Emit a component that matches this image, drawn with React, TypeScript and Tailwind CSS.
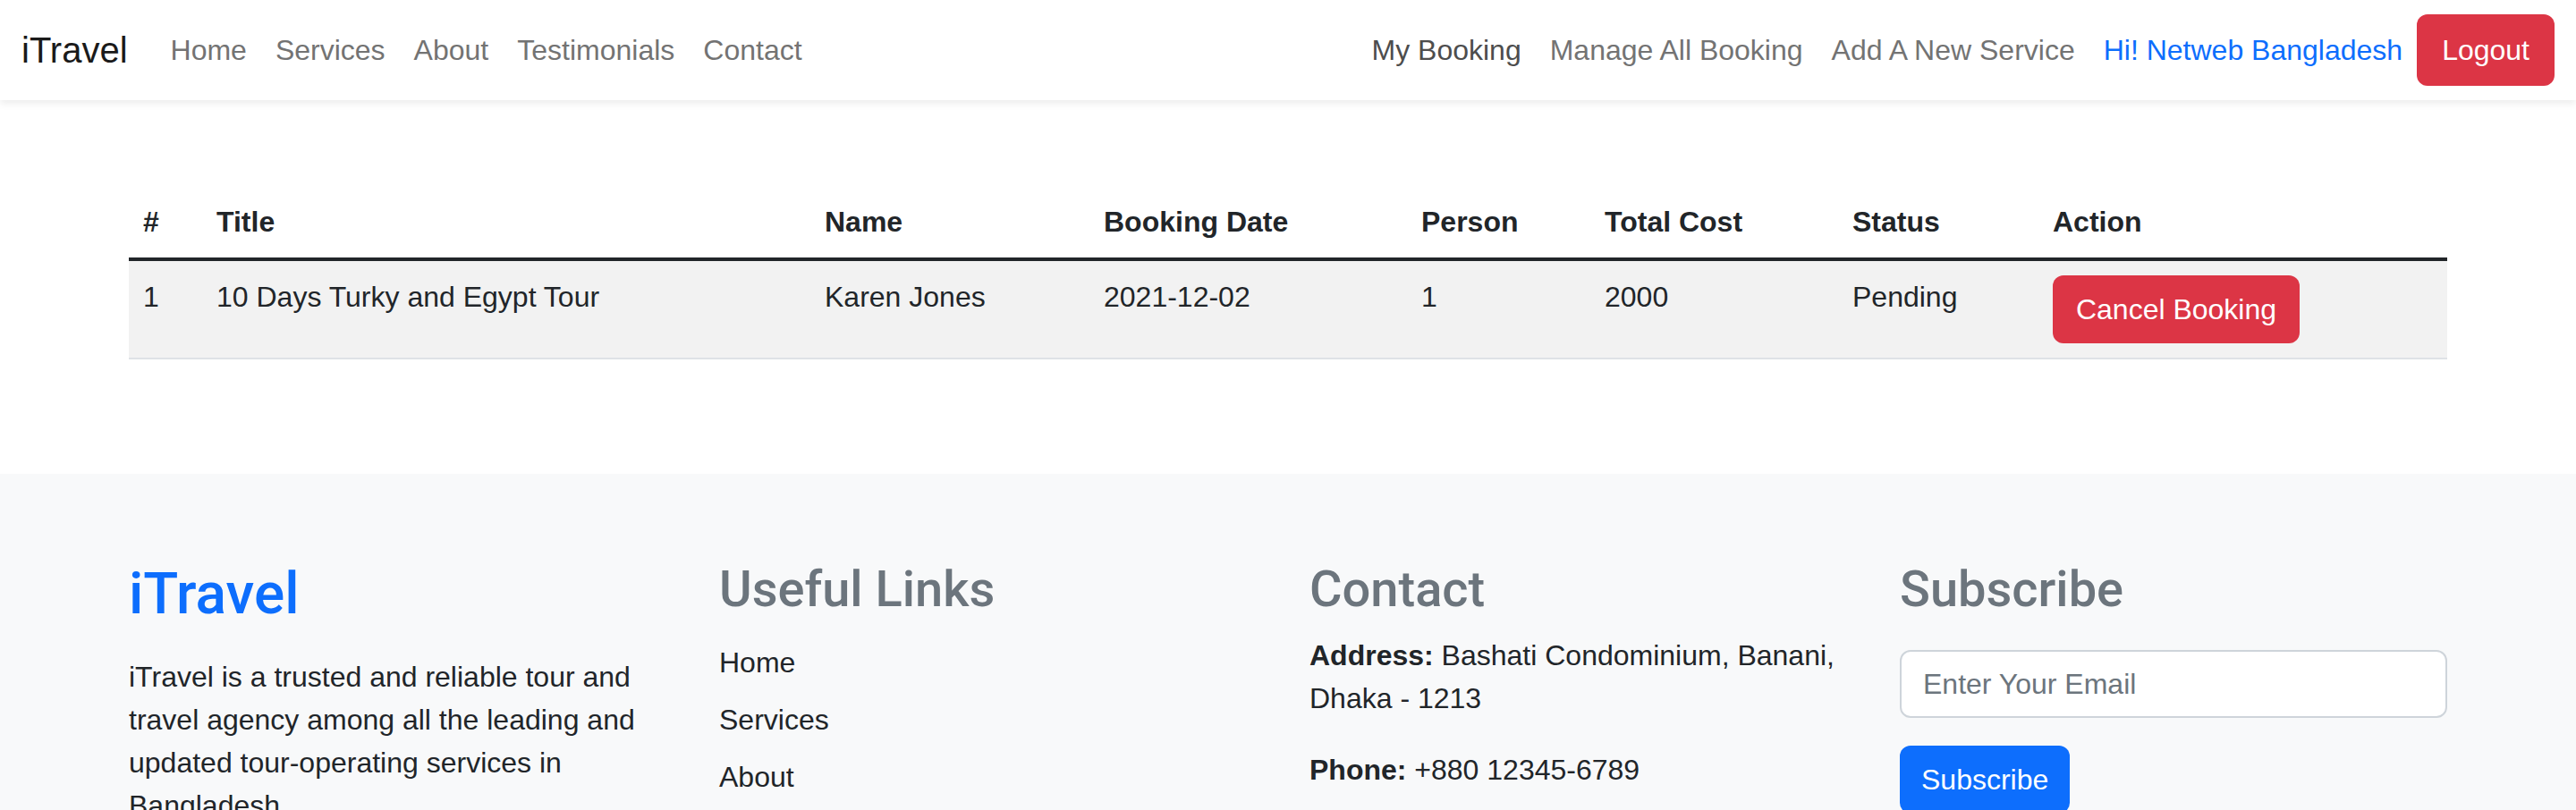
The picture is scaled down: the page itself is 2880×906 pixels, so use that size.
import { ReactNode } from 'react';

const font = { fontFamily: '"Liberation Sans", Arial, sans-serif' };
const headingFont = { fontFamily: 'Roboto, "Liberation Sans", Arial, sans-serif' };

const NavLink = ({ children, className = 'text-[#737373]' }: { children: ReactNode; className?: string }) => (
  <a href="#" className={`px-[16px] text-[32px] leading-[48px] ${className}`}>
    {children}
  </a>
);

const Navbar = () => (
  <nav className="relative z-10 bg-white shadow-[0_4px_8px_rgba(0,0,0,0.075)]">
    <div className="flex h-[112px] items-center px-[24px] py-[16px]">
      <a href="#" className="mr-[32px] text-[40px] leading-[60px] text-[#1a1a1a]">iTravel</a>
      <div className="flex items-center">
        <NavLink>Home</NavLink>
        <NavLink>Services</NavLink>
        <NavLink>About</NavLink>
        <NavLink>Testimonials</NavLink>
        <NavLink>Contact</NavLink>
      </div>
      <div className="ml-auto flex items-center">
        <NavLink className="text-[#4d4d4d]">My Booking</NavLink>
        <NavLink>Manage All Booking</NavLink>
        <NavLink>Add A New Service</NavLink>
        <NavLink className="text-[#0d6efd]">Hi! Netweb Bangladesh</NavLink>
        <button className="h-[80px] rounded-[12px] bg-[#dc3545] px-[28px] text-[32px] leading-[48px] text-white">
          Logout
        </button>
      </div>
    </div>
  </nav>
);

const BookingTable = () => (
  <section className="mx-auto mt-[96px] w-[2640px] px-[24px] pb-[128px]">
    <table className="w-full table-fixed border-collapse text-left text-[32px] leading-[48px] text-[#212529]">
      <colgroup>
        <col className="w-[82px]" />
        <col className="w-[680px]" />
        <col className="w-[312px]" />
        <col className="w-[355px]" />
        <col className="w-[205px]" />
        <col className="w-[277px]" />
        <col className="w-[224px]" />
        <col />
      </colgroup>
      <thead>
        <tr className="border-b-[4px] border-[#212529] font-bold">
          <th className="p-[16px] align-top">#</th>
          <th className="p-[16px] align-top">Title</th>
          <th className="p-[16px] align-top">Name</th>
          <th className="p-[16px] align-top">Booking Date</th>
          <th className="p-[16px] align-top">Person</th>
          <th className="p-[16px] align-top">Total Cost</th>
          <th className="p-[16px] align-top">Status</th>
          <th className="p-[16px] align-top">Action</th>
        </tr>
      </thead>
      <tbody>
        <tr className="border-b-[2px] border-[#dee2e6] bg-[#f2f2f2]">
          <td className="p-[16px] align-top">1</td>
          <td className="p-[16px] align-top">10 Days Turky and Egypt Tour</td>
          <td className="p-[16px] align-top">Karen Jones</td>
          <td className="p-[16px] align-top">2021-12-02</td>
          <td className="p-[16px] align-top">1</td>
          <td className="p-[16px] align-top">2000</td>
          <td className="p-[16px] align-top">Pending</td>
          <td className="p-[16px] align-top">
            <button className="h-[76px] w-[276px] rounded-[12px] bg-[#dc3545] text-[32px] leading-[48px] text-white">
              Cancel Booking
            </button>
          </td>
        </tr>
      </tbody>
    </table>
  </section>
);

const Footer = () => (
  <footer className="bg-[#f8f9fa] pt-[96px] pb-[96px]">
    <div className="mx-auto grid w-[2640px] grid-cols-4 text-[32px] leading-[48px] text-[#212529]">
      <div className="px-[24px]">
        <h2 className="mb-[30px] text-[64px] font-medium leading-[77px] text-[#0d6efd]" style={headingFont}>
          iTravel
        </h2>
        <p>
          iTravel is a trusted and reliable tour and
          <br />
          travel agency among all the leading and
          <br />
          updated tour-operating services in
          <br />
          Bangladesh
        </p>
      </div>
      <div className="px-[24px]">
        <h3 className="mb-[24px] text-[56px] font-medium leading-[67px] text-[#6c757d]" style={headingFont}>
          Useful Links
        </h3>
        <ul className="flex flex-col gap-[16px]">
          <li><a href="#">Home</a></li>
          <li><a href="#">Services</a></li>
          <li><a href="#">About</a></li>
          <li><a href="#">Testimonials</a></li>
          <li><a href="#">Contact</a></li>
        </ul>
      </div>
      <div className="px-[24px]">
        <h3 className="mb-[16px] text-[56px] font-medium leading-[67px] text-[#6c757d]" style={headingFont}>
          Contact
        </h3>
        <p className="mb-[32px]">
          <b>Address:</b> Bashati Condominium, Banani,
          <br />
          Dhaka - 1213
        </p>
        <p className="mb-[32px]">
          <b>Phone:</b> +880 12345-6789
        </p>
        <p>
          <b>Email:</b> info@itravel.com
        </p>
      </div>
      <div className="px-[24px]">
        <h3 className="mb-[34px] text-[56px] font-medium leading-[67px] text-[#6c757d]" style={headingFont}>
          Subscribe
        </h3>
        <input
          type="email"
          placeholder="Enter Your Email"
          className="block h-[76px] w-full rounded-[12px] border-[2px] border-[#ced4da] bg-white px-[24px] text-[32px] text-[#212529] outline-none placeholder:text-[#6c757d]"
          style={font}
        />
        <button className="mt-[31px] h-[76px] rounded-[12px] bg-[#0d6efd] px-[24px] text-[32px] leading-[48px] text-white">
          Subscribe
        </button>
      </div>
    </div>
  </footer>
);

export default function App() {
  return (
    <div className="h-[906px] overflow-hidden bg-white" style={font}>
      <Navbar />
      <BookingTable />
      <Footer />
    </div>
  );
}
